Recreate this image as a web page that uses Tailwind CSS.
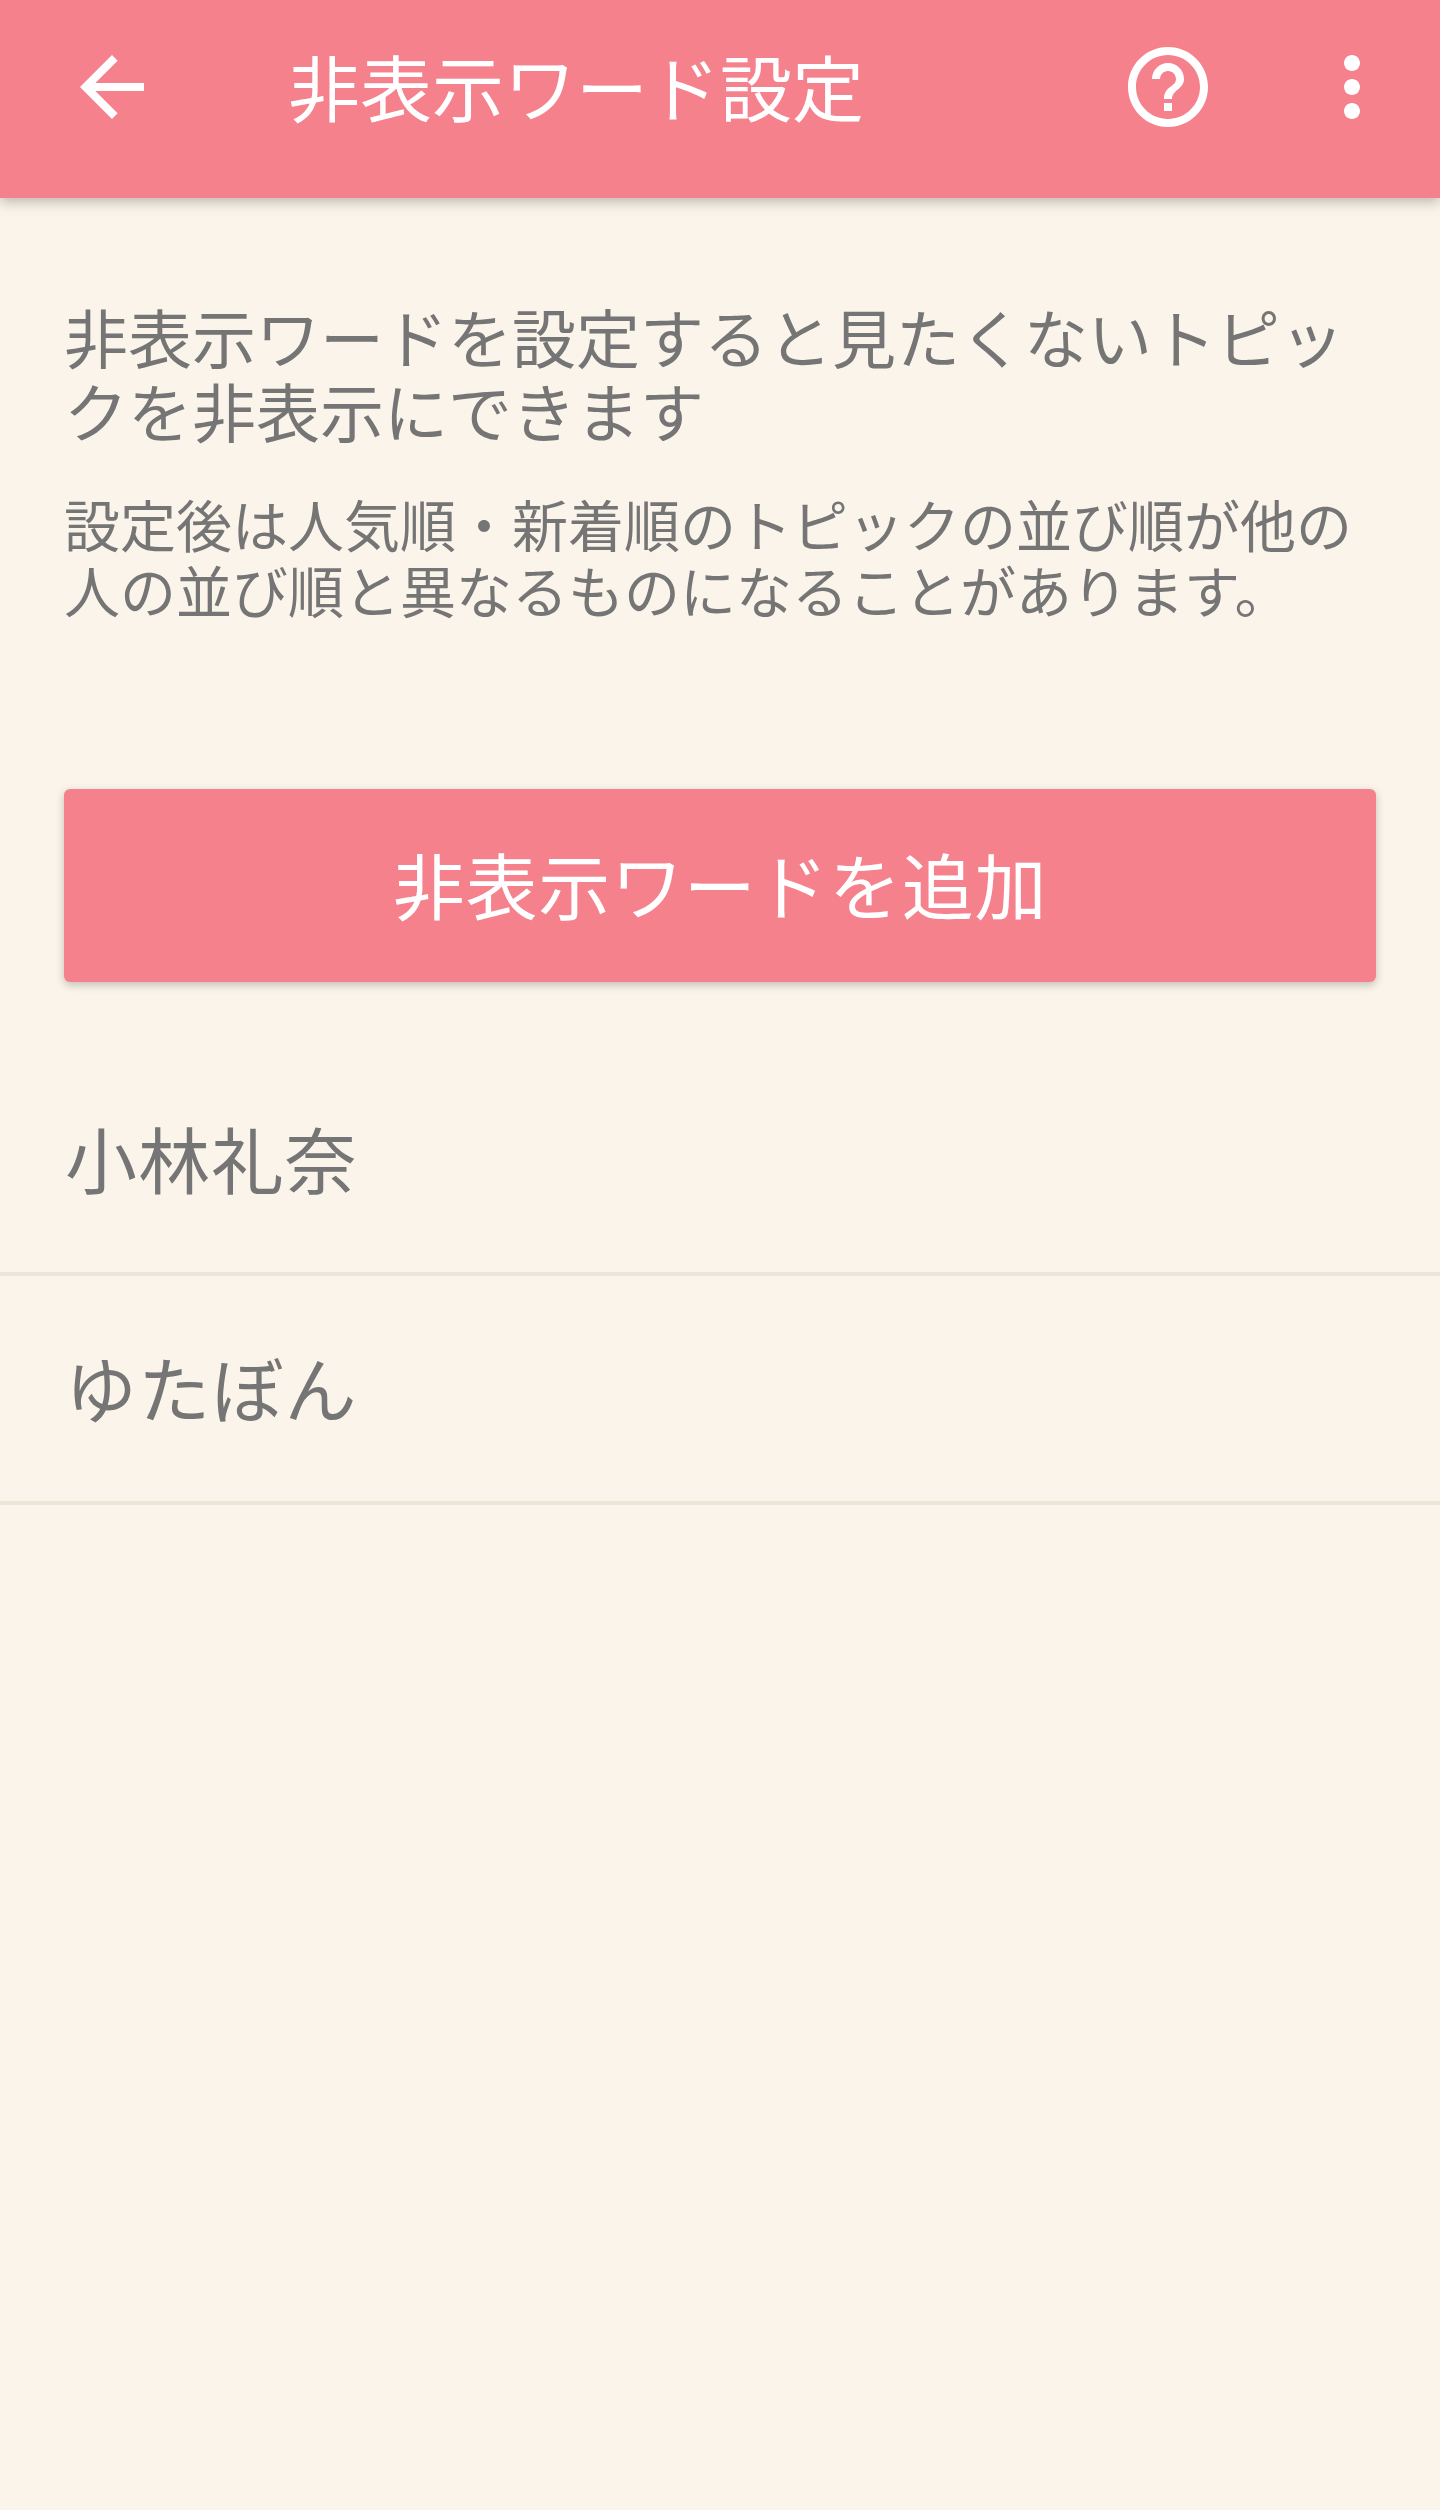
<!DOCTYPE html>
<html lang="ja">
<head>
    <meta charset="UTF-8">
    <meta name="viewport" content="width=device-width, initial-scale=1.0">
    <title>非表示ワード設定</title>
    <script src="https://cdn.jsdelivr.net/npm/@tailwindcss/browser@4"></script>
</head>
<body class="bg-[#fbf4ea] font-['Noto_Sans_CJK_JP',sans-serif]">
    <div class="w-[1440px] h-[2510px] overflow-hidden flex flex-col">
        <!-- Toolbar -->
        <header class="relative flex items-center h-[198px] shrink-0 bg-[#f5818d] text-white shadow-[0_4px_12px_rgba(0,0,0,0.25)] pb-[24px]">
            <svg class="ml-[64px] w-[96px] h-[96px]" viewBox="0 0 24 24" fill="#fff"><path d="M20 11H7.83l5.59-5.59L12 4l-8 8 8 8 1.41-1.41L7.83 13H20v-2z"/></svg>
            <h1 class="ml-[128px] -mt-[5px] text-[72px] leading-[96px] font-normal whitespace-nowrap">非表示ワード設定</h1>
            <svg class="ml-auto w-[96px] h-[96px]" viewBox="0 0 24 24" fill="#fff"><path d="M11 18h2v-2h-2v2zm1-16C6.48 2 2 6.48 2 12s4.48 10 10 10 10-4.48 10-10S17.52 2 12 2zm0 18c-4.41 0-8-3.59-8-8s3.59-8 8-8 8 3.59 8 8-3.59 8-8 8zm0-14c-2.21 0-4 1.79-4 4h2c0-1.1.9-2 2-2s2 .9 2 2c0 2-3 1.75-3 5h2c0-2.25 3-2.5 3-5 0-2.21-1.79-4-4-4z"/></svg>
            <svg class="ml-[88px] mr-[40px] w-[96px] h-[96px]" viewBox="0 0 24 24" fill="#fff"><path d="M12 8c1.1 0 2-.9 2-2s-.9-2-2-2-2 .9-2 2 .9 2 2 2zm0 2c-1.1 0-2 .9-2 2s.9 2 2 2 2-.9 2-2-.9-2-2-2zm0 6c-1.1 0-2 .9-2 2s.9 2 2 2 2-.9 2-2-.9-2-2-2z"/></svg>
        </header>

        <!-- Description -->
        <section class="px-[64px] pt-[100px] text-[#757575] font-normal">
            <p class="text-[64px] leading-[74px]">非表示ワードを設定すると見たくないトピックを非表示にできます</p>
            <p class="mt-[44px] text-[56px] leading-[66px]">設定後は人気順・新着順のトピックの並び順が他の人の並び順と異なるものになることがあります。</p>
        </section>

        <!-- Add button -->
        <div class="px-[64px] mt-[167px]">
            <button class="w-full h-[193px] pb-[6px] rounded-[6px] bg-[#f5818d] text-white text-[72px] tracking-[0.7px] font-normal shadow-[0_3px_8px_rgba(0,0,0,0.22)]">非表示ワードを追加</button>
        </div>

        <!-- Word list -->
        <ul class="mt-[65px] text-[#757575] text-[72px] tracking-[1.2px] font-normal">
            <li class="flex items-center h-[229px] px-[65px] pb-[5px] border-b-[4px] border-[#eee5d9]">小林礼奈</li>
            <li class="flex items-center h-[229px] px-[65px] pb-[5px] border-b-[4px] border-[#eee5d9]">ゆたぼん</li>
        </ul>
    </div>
</body>
</html>
